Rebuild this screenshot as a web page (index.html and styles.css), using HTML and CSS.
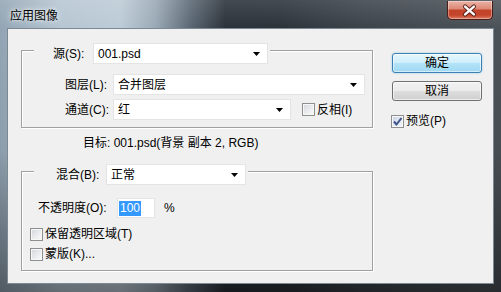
FILE: index.html
```html
<!DOCTYPE html>
<html lang="zh-CN">
<head>
<meta charset="utf-8">
<title>应用图像</title>
<link rel="stylesheet" href="styles.css">
</head>
<body>
<div class="window">
  <div class="titlebar">
    <span class="title">应用图像</span>
    <div class="close">
      <svg width="46" height="19" viewBox="0 0 46 19">
        <path d="M18.5 5.5 L27.5 13.5 M27.5 5.5 L18.5 13.5" stroke="#5b231b" stroke-width="4.4" stroke-linecap="round" fill="none"/>
        <path d="M18.5 5.5 L27.5 13.5 M27.5 5.5 L18.5 13.5" stroke="#ffffff" stroke-width="2.4" stroke-linecap="round" fill="none"/>
      </svg>
    </div>
  </div>
  <div class="client">
    <div class="main">
      <div class="group g1">
        <div class="legend lg1">
          <span class="lbl l-src">源(S):</span>
          <div class="combo w-src"><span>001.psd</span><svg class="arrow" width="7" height="4" viewBox="0 0 7 4"><polygon points="0,0 7,0 3.5,4" fill="#000"/></svg></div>
        </div>
        <div class="row r-layer">
          <span class="lbl l-fix">图层(L):</span>
          <div class="combo w-layer"><span>合并图层</span><svg class="arrow" width="7" height="4" viewBox="0 0 7 4"><polygon points="0,0 7,0 3.5,4" fill="#000"/></svg></div>
        </div>
        <div class="row r-chan">
          <span class="lbl l-fix">通道(C):</span>
          <div class="combo w-chan"><span>红</span><svg class="arrow" width="7" height="4" viewBox="0 0 7 4"><polygon points="0,0 7,0 3.5,4" fill="#000"/></svg></div>
          <label class="check c-inv"><span class="box"></span><span>反相(I)</span></label>
        </div>
      </div>
      <div class="target">目标: 001.psd(背景 副本 2, RGB)</div>
      <div class="group g2">
        <div class="legend lg2">
          <span class="lbl l-blend">混合(B):</span>
          <div class="combo w-blend"><span>正常</span><svg class="arrow" width="7" height="4" viewBox="0 0 7 4"><polygon points="0,0 7,0 3.5,4" fill="#000"/></svg></div>
        </div>
        <div class="row r-opacity">
          <span class="lbl l-op">不透明度(O):</span>
          <div class="input"><span class="sel">100</span></div>
          <span class="pct">%</span>
        </div>
        <label class="check c-row c-first"><span class="box"></span><span>保留透明区域(T)</span></label>
        <label class="check c-row c-second"><span class="box"></span><span>蒙版(K)...</span></label>
      </div>
    </div>
    <div class="side">
      <div class="btn btn-default">确定</div>
      <div class="btn btn-cancel">取消</div>
      <label class="check c-preview"><span class="box checked"><svg width="11" height="11" viewBox="0 0 11 11"><polyline points="2,5.5 4.5,8.5 9.5,2" fill="none" stroke="#3d5289" stroke-width="2"/></svg></span><span>预览(P)</span></label>
    </div>
  </div>
</div>
</body>
</html>
```

FILE: styles.css
```css
html, body {
  margin: 0;
  padding: 0;
}

body {
  width: 501px;
  height: 292px;
  overflow: hidden;
  font-family: "Liberation Sans", "Noto Sans CJK SC", sans-serif;
  font-size: 12px;
  color: #000;
  background: #2d333a;
}

.window {
  width: 501px;
  height: 292px;
  display: flex;
  flex-direction: column;
  background:
    linear-gradient(180deg, rgba(255,255,255,0.12) 0, rgba(0,0,0,0) 29px, rgba(0,0,0,0.05) 150px, rgba(0,0,0,0.45) 100%),
    linear-gradient(90deg, #93a5b4 0%, #b6c6d2 12%, #bccbd6 24%, #9aa9b6 31%, #5a6773 38%, #2a3139 45%, #2b3239 56%, #3b4249 72%, #4b5258 100%);
}

.titlebar {
  height: 29px;
  display: flex;
  align-items: flex-start;
  justify-content: space-between;
}

.title {
  margin: 9px 0 0 10px;
  line-height: 14px;
  text-shadow: 0 0 6px rgba(255,255,255,0.9), 0 0 3px rgba(255,255,255,0.7);
}

.close {
  width: 46px;
  height: 19px;
  box-sizing: border-box;
  margin: 1px 8px 0 0;
  border: 1px solid #4a1e18;
  border-top: none;
  border-radius: 0 0 5px 5px;
  background: linear-gradient(180deg, #eab3a6 0%, #dd8a77 42%, #c3442b 52%, #c4452c 78%, #dc7a60 100%);
  box-shadow: inset 0 0 0 1px rgba(255,255,255,0.35);
  display: flex;
}

.close svg {
  margin-left: -1px;
}

.client {
  flex: 1;
  margin: 0 8px 9px;
  background: #f0f0f0;
  display: flex;
  box-shadow: 0 0 0 1px #7c8892;
}

.main {
  padding-left: 13px;
  display: flex;
  flex-direction: column;
  align-items: flex-start;
}

.group {
  width: 352px;
  box-sizing: border-box;
  border: 1px solid #a0a0a0;
  box-shadow: 1px 1px 0 #ffffff, inset 1px 1px 0 #ffffff;
  display: flex;
  flex-direction: column;
  align-items: flex-start;
}

.g1 {
  margin-top: 21px;
  padding-bottom: 7px;
}

.g2 {
  margin-top: 20px;
  padding-bottom: 8px;
}

.legend {
  display: flex;
  align-items: center;
  height: 21px;
  margin: -8px 0 0 12px;
  background: #f0f0f0;
}

.lg1 {
  padding: 0 2px 0 19px;
}

.lg2 {
  padding: 0 2px 0 22px;
}

.lbl {
  white-space: nowrap;
  line-height: 16px;
}

.l-src {
  width: 40px;
}

.l-blend {
  width: 50px;
}

.l-fix {
  width: 48px;
}

.l-op {
  width: 79px;
}

.combo {
  height: 21px;
  box-sizing: border-box;
  background: #ffffff;
  border: 1px solid #e4e4e4;
  display: flex;
  align-items: center;
  justify-content: space-between;
  padding: 0 7px 0 4px;
  line-height: 16px;
}

.w-src {
  width: 175px;
}

.w-layer {
  width: 252px;
}

.w-chan {
  width: 178px;
}

.w-blend {
  width: 140px;
}

.arrow {
  display: block;
  flex: none;
}

.row {
  display: flex;
  align-items: center;
}

.r-layer {
  margin: 10px 0 0 43px;
}

.r-chan {
  margin: 4px 0 0 43px;
}

.check {
  display: flex;
  align-items: center;
  gap: 2px;
  height: 16px;
  line-height: 16px;
  white-space: nowrap;
}

.box {
  width: 13px;
  height: 13px;
  box-sizing: border-box;
  border: 1px solid #8e8f8f;
  background: linear-gradient(135deg, #d3d6da 0%, #eceef0 60%, #fbfbfb 100%);
  box-shadow: inset 0 0 0 1px #f7f7f7;
  display: flex;
  align-items: center;
  justify-content: center;
  flex: none;
}

.box.checked {
  background: linear-gradient(135deg, #c9d3e6 0%, #e4e9f3 60%, #f7f9fc 100%);
}

.box svg {
  display: block;
}

.c-inv {
  margin-left: 11px;
}

.target {
  margin: 7px 0 0 62px;
  line-height: 16px;
  white-space: nowrap;
}

.r-opacity {
  margin: 13px 0 0 16px;
  height: 20px;
}

.input {
  width: 38px;
  height: 20px;
  box-sizing: border-box;
  background: #ffffff;
  border: 1px solid #e4e4e4;
  padding: 2px 0 0 1px;
  display: flex;
  align-items: flex-start;
}

.sel {
  background: #3399ff;
  color: #ffffff;
  line-height: 15px;
  padding: 0 1px;
}

.pct {
  margin-left: 9px;
}

.c-row {
  margin-left: 8px;
}

.c-first {
  margin-top: 8px;
}

.c-second {
  margin-top: 4px;
}

.side {
  margin-left: auto;
  padding: 24px 11px 0 0;
  display: flex;
  flex-direction: column;
  align-items: flex-start;
}

.btn {
  width: 90px;
  height: 20px;
  box-sizing: border-box;
  border-radius: 3px;
  display: flex;
  align-items: center;
  justify-content: center;
  line-height: 16px;
}

.btn-default {
  border: 1px solid #3c7fb1;
  background: linear-gradient(180deg, #e6f6fd 0%, #cfeefc 48%, #b2e3f8 52%, #9fd8f2 100%);
  box-shadow: inset 0 0 0 1px rgba(255,255,255,0.55), 0 0 2px rgba(70,170,230,0.6);
}

.btn-cancel {
  margin-top: 8px;
  border: 1px solid #707070;
  background: linear-gradient(180deg, #f2f2f2 0%, #ebebeb 48%, #dddddd 52%, #cfcfcf 100%);
  box-shadow: inset 0 0 0 1px rgba(255,255,255,0.6);
}

.c-preview {
  margin: 12px 0 0 -1px;
}
```
